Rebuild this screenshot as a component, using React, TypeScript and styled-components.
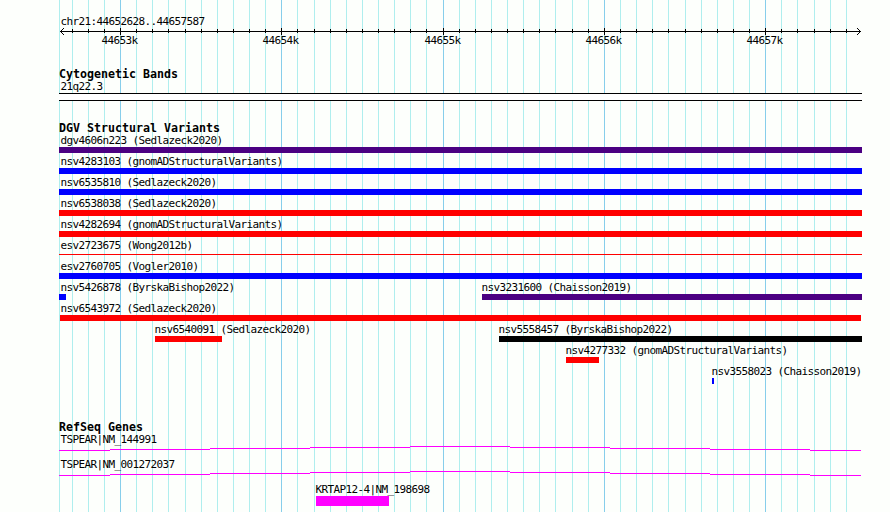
import styled, { createGlobalStyle } from "styled-components";

type Feature = {
  name: string;
  start: number;
  end: number;
  color: string;
  thin?: boolean;
};

// all x values are pixels from the left edge of the track area
const TRACK_WIDTH = 803;

const MAJOR = [61, 222, 384, 545, 706];
const MINOR = [
  13, 29, 45, 77, 93, 109, 126, 142, 158, 174, 190, 206, 238, 255, 271, 287,
  303, 319, 335, 351, 367, 400, 416, 432, 448, 464, 480, 496, 513, 529, 561,
  577, 593, 609, 626, 642, 658, 674, 690, 722, 738, 755, 771, 787,
];

const LABELS = ["44653k", "44654k", "44655k", "44656k", "44657k"];

const GAIN = "#0000ff";
const LOSS = "#ff0000";
const COMPLEX = "#4b0082";

const variantRows: Feature[][] = [
  [{ name: "dgv4606n223 (Sedlazeck2020)", start: 0, end: 803, color: COMPLEX }],
  [{ name: "nsv4283103 (gnomADStructuralVariants)", start: 0, end: 803, color: GAIN }],
  [{ name: "nsv6535810 (Sedlazeck2020)", start: 0, end: 803, color: GAIN }],
  [{ name: "nsv6538038 (Sedlazeck2020)", start: 0, end: 803, color: LOSS }],
  [{ name: "nsv4282694 (gnomADStructuralVariants)", start: 0, end: 803, color: LOSS }],
  [{ name: "esv2723675 (Wong2012b)", start: 0, end: 803, color: LOSS, thin: true }],
  [{ name: "esv2760705 (Vogler2010)", start: 0, end: 803, color: GAIN }],
  [
    { name: "nsv5426878 (ByrskaBishop2022)", start: 0, end: 7, color: GAIN },
    { name: "nsv3231600 (Chaisson2019)", start: 423, end: 803, color: COMPLEX },
  ],
  [{ name: "nsv6543972 (Sedlazeck2020)", start: 1, end: 802, color: LOSS }],
  [
    { name: "nsv6540091 (Sedlazeck2020)", start: 96, end: 163, color: LOSS },
    { name: "nsv5558457 (ByrskaBishop2022)", start: 440, end: 803, color: "#000000" },
  ],
  [{ name: "nsv4277332 (gnomADStructuralVariants)", start: 507, end: 540, color: LOSS }],
  [{ name: "nsv3558023 (Chaisson2019)", start: 653, end: 655, color: GAIN }],
];

const GlobalStyle = createGlobalStyle`
  body {
    margin: 0;
    background: #fdfffc;
  }
`;

const Browser = styled.main`
  position: relative;
  box-sizing: border-box;
  width: 890px;
  height: 512px;
  padding: 16px 28px 0 59px;
  overflow: hidden;
  background: #fdfffc;
  color: #000;
  font-family: "DejaVu Sans Mono", monospace;
`;

const GridLines = styled.svg`
  position: absolute;
  top: 0;
  left: 59px;
`;

const Content = styled.div`
  position: relative;
  width: ${TRACK_WIDTH}px;
`;

const Label = styled.div<{ $indent?: number }>`
  height: 12px;
  margin-left: ${(props) => props.$indent ?? 1}px;
  padding-left: 0.5px;
  font-size: 11px;
  line-height: 11px;
  letter-spacing: -0.622px;
  white-space: pre;
`;

const Axis = styled.svg`
  display: block;
`;

const AxisLabels = styled.div`
  display: grid;
`;

const AxisLabel = styled(Label)`
  grid-area: 1 / 1;
`;

const Track = styled.section<{ $gap: number }>`
  margin-top: ${(props) => props.$gap}px;
`;

const TrackTitle = styled.h2`
  height: 13px;
  margin: 0;
  font-size: 11.63px;
  font-weight: bold;
  line-height: 12px;
  white-space: pre;
`;

const Band = styled.div`
  box-sizing: border-box;
  height: 8px;
  border: solid #000;
  border-width: 1px 0;
  background: #fff;
`;

const Row = styled.div`
  display: grid;
  height: 21px;
`;

const FeatureItem = styled.div`
  grid-area: 1 / 1;
`;

const Bar = styled.div<{ $start: number; $end: number; $color: string; $thin?: boolean }>`
  width: ${(props) => props.$end - props.$start}px;
  height: ${(props) => (props.$thin ? 1 : 6)}px;
  margin-top: ${(props) => (props.$thin ? 2 : 0)}px;
  margin-left: ${(props) => props.$start}px;
  background: ${(props) => props.$color};
`;

const GeneRow = styled.div`
  height: 25px;
`;

const Intron = styled.svg`
  display: block;
`;

const Exon = styled(Bar)`
  height: 10px;
`;

const Ruler = () => (
  <Axis width={TRACK_WIDTH} height={7} shapeRendering="crispEdges">
    <rect x={1} y={3} width={801} height={1} />
    {MINOR.map((x) => (
      <rect key={x} x={x} y={1} width={1} height={4} />
    ))}
    {MAJOR.map((x) => (
      <rect key={x} x={x} y={0} width={1} height={7} />
    ))}
    {[1, 2, 3].map((d) => (
      <g key={d}>
        <rect x={1 + d} y={3 - d} width={1} height={1} />
        <rect x={1 + d} y={3 + d} width={1} height={1} />
        <rect x={801 - d} y={3 - d} width={1} height={1} />
        <rect x={801 - d} y={3 + d} width={1} height={1} />
      </g>
    ))}
  </Axis>
);

const GeneLine = () => (
  <Intron width={TRACK_WIDTH} height={5} shapeRendering="crispEdges">
    {[4, 3, 2, 1, 0, 1, 2, 3, 4].map((y, i) => {
      const from = i === 0 ? 0 : i * 100 - 49;
      const to = Math.min(i * 100 + 51, 802);
      return <rect key={i} x={from} y={y} width={to - from} height={1} fill="#ff00ff" />;
    })}
  </Intron>
);

const FeatureGlyph = ({ feature }: { feature: Feature }) => {
  const indent = feature.start <= 1 ? 1 : feature.start - 1;
  return (
    <FeatureItem>
      <Label $indent={indent}>{feature.name}</Label>
      <Bar
        $start={feature.start}
        $end={feature.end}
        $color={feature.color}
        $thin={feature.thin}
      />
    </FeatureItem>
  );
};

const App = () => {
  return (
    <>
      <GlobalStyle />
      <Browser>
        <GridLines width={TRACK_WIDTH} height={512} shapeRendering="crispEdges">
          {[0, ...MINOR].map((x) => (
            <rect key={x} x={x} y={0} width={1} height={512} fill="#afeeee" />
          ))}
          {MAJOR.map((x) => (
            <rect key={x} x={x} y={0} width={1} height={512} fill="#87ceeb" />
          ))}
        </GridLines>
        <Content>
          <Label>chr21:44652628..44657587</Label>
          <Ruler />
          <AxisLabels>
            {LABELS.map((label, i) => (
              <AxisLabel key={label} $indent={MAJOR[i] - 19}>
                {label}
              </AxisLabel>
            ))}
          </AxisLabels>

          <Track $gap={21}>
            <TrackTitle>Cytogenetic Bands</TrackTitle>
            <Label>21q22.3</Label>
            <Band />
          </Track>

          <Track $gap={21}>
            <TrackTitle>DGV Structural Variants</TrackTitle>
            {variantRows.map((row) => (
              <Row key={row[0].name}>
                {row.map((feature) => (
                  <FeatureGlyph key={feature.name} feature={feature} />
                ))}
              </Row>
            ))}
          </Track>

          <Track $gap={34}>
            <TrackTitle>RefSeq Genes</TrackTitle>
            <GeneRow>
              <Label>TSPEAR|NM_144991</Label>
              <GeneLine />
            </GeneRow>
            <GeneRow>
              <Label>TSPEAR|NM_001272037</Label>
              <GeneLine />
            </GeneRow>
            <GeneRow>
              <Label $indent={256}>KRTAP12-4|NM_198698</Label>
              <Exon $start={257} $end={330} $color="#ff00ff" />
            </GeneRow>
          </Track>
        </Content>
      </Browser>
    </>
  );
};

export default App;
